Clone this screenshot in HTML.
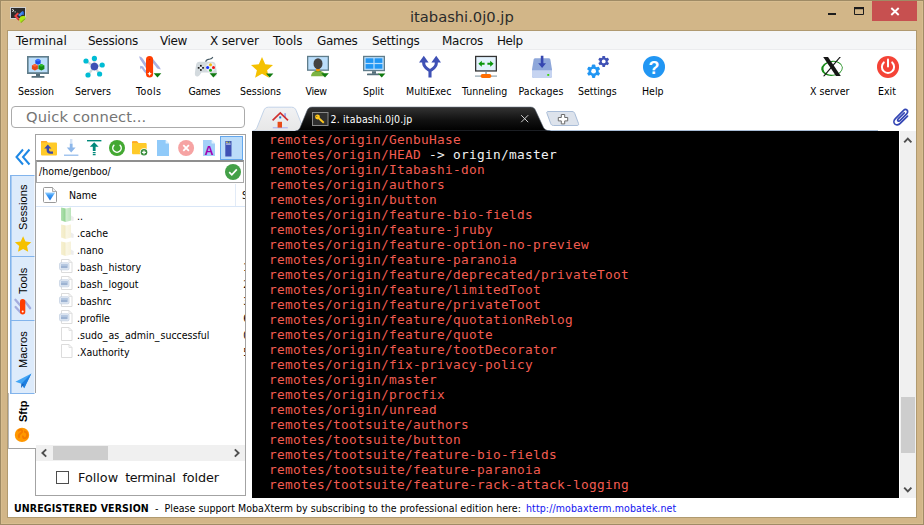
<!DOCTYPE html>
<html><head><meta charset="utf-8"><title>itabashi.0j0.jp</title>
<style>
*{box-sizing:border-box;margin:0;padding:0}
html,body{width:924px;height:525px;overflow:hidden}
body{background:#d2b688;font-family:"Liberation Sans","DejaVu Sans",sans-serif;position:relative;color:#000}
.abs,body>div,body>svg,body>span,body>pre{position:absolute}
svg{overflow:visible;display:block}
#frame{left:0;top:0;width:924px;height:525px;border:1px solid #9f8b65;box-shadow:inset 0 0 0 1px #d7bd90}
#cframe{left:7px;top:30px;width:910px;height:488px;border:1px solid #b09a70}
#title{left:410px;top:0;height:31px;white-space:pre;font-family:"DejaVu Sans","Liberation Sans",sans-serif;font-size:14.7px;line-height:34px;color:#2b2b2b}
#client{left:8px;top:31px;width:908px;height:486px;background:#fff}
#menubar{left:8px;top:31px;width:908px;height:19px;background:#f5f6f7;border-bottom:1px solid #ebecee}
.menu{top:32px;height:19px;font-family:"DejaVu Sans","Liberation Sans",sans-serif;font-size:12px;line-height:19px;white-space:pre;color:#111}
.tl{top:84px;height:14px;font-family:"DejaVu Sans Condensed","DejaVu Sans","Liberation Sans",sans-serif;font-stretch:condensed;font-size:10.5px;line-height:14px;white-space:pre;color:#000}
#closebtn{left:872px;top:1px;width:45px;height:20px;background:#c75050}
/* terminal */
#term{left:252px;top:131px;width:647px;height:367px;background:#000;overflow:hidden}
#term pre{position:absolute;left:17px;top:1px;font-family:"DejaVu Sans Mono","Liberation Mono",monospace;font-size:12.8px;line-height:15px;color:#f25c51;letter-spacing:.294px;}
#term pre b{font-weight:normal;color:#f2f2f2;}
#vscroll{left:900px;top:131px;width:16px;height:367px;background:#f0f0f0}
#vthumb{left:901px;top:397px;width:14px;height:56px;background:#cdcdcd}
.vt{left:10px;width:25px;background:#ddebfb;border:1px solid #82b4ec;border-right-color:#f1f6fd;box-shadow:inset 1px 0 0 #a9cbf2}
.vtt{width:0;height:0;letter-spacing:.12px;font-family:"Liberation Sans",sans-serif;font-size:11px;line-height:12px;white-space:pre;transform:rotate(-90deg);transform-origin:0 0;color:#000}
.ft{height:14px;line-height:14px;font-family:"DejaVu Sans Condensed","DejaVu Sans","Liberation Sans",sans-serif;font-stretch:condensed;font-size:10.5px;white-space:pre;color:#000}
.tah{font-family:"DejaVu Sans Condensed","DejaVu Sans","Liberation Sans",sans-serif;font-stretch:condensed;}
.ft i{font-style:normal;letter-spacing:1.1px}
</style></head><body>
<div id="frame"></div>
<!-- title bar -->
<svg id="appicon" style="left:10px;top:7px" width="16" height="16" viewBox="10 7 16 16">
<rect x="10.500" y="7.500" width="15" height="11" fill="#2d2d2d" stroke="#d0d0d0" stroke-width="1"/>
<path d="M12.200 9.400l1.800 1.100-1.800 1.100" fill="none" stroke="#fff" stroke-width=".9"/><path d="M14.400 11.900h1.600" stroke="#ddd" stroke-width=".7"/>
<path d="M14 16l3.500-3.500 1.500 1.300-2.200 2.200 3.200 3.200-1.400 1.300z" fill="#ee4545"/><path d="M14 16l4.600 4.500 1.400-1.300-.8-.8-1 .9z" fill="#c62828"/>
<path d="M18 15l4.500-4 1.500 1.300v2.200l-2 .2-2 1.700z" fill="#4a8cf0"/><path d="M22.500 11l1.500 1.300v2.200l-1.400.1z" fill="#1f5fd0"/>
<path d="M19 19.800l1.500-3.400 2.500-.4 1.500-.2 1.200 1.700-5.200 4.800z" fill="#aeea10"/><path d="M20.500 22.300l5.200-4.800-.3 1.600-4.300 3.800z" fill="#7cb800"/>
</svg>
<div id="title">itabashi.0j0.jp</div>
<svg style="left:826px;top:5px" width="42" height="14" viewBox="826 5 42 14">
<rect x="828" y="13" width="8" height="2" fill="#1c1c1c"/>
<path d="M854.5 8v6.5h9V8z" fill="none" stroke="#1c1c1c" stroke-width="1"/><rect x="854" y="7" width="10" height="2.2" fill="#1c1c1c"/>
</svg>
<div id="closebtn"></div>
<svg style="left:890px;top:7px" width="10" height="9" viewBox="890 7 10 9"><path d="M891.300 8l7.400 7M898.700 8l-7.400 7" stroke="#fff" stroke-width="1.900" fill="none"/></svg>

<div id="cframe"></div>
<div id="client"></div>
<div id="menubar"></div>
<span class="menu" style="left:16px">Terminal</span><span class="menu" style="left:88px;letter-spacing:-0.25px">Sessions</span><span class="menu" style="left:160px;letter-spacing:-0.4px">View</span><span class="menu" style="left:210px;letter-spacing:-0.15px">X server</span><span class="menu" style="left:273px">Tools</span><span class="menu" style="left:317px;letter-spacing:-0.3px">Games</span><span class="menu" style="left:372px;letter-spacing:-0.2px">Settings</span><span class="menu" style="left:442px;letter-spacing:-0.25px">Macros</span><span class="menu" style="left:497px;letter-spacing:-0.4px">Help</span>

<!-- TOOLBAR-ICONS -->
<!-- Session -->
<svg style="left:27px;top:55px" width="24" height="24" viewBox="27 55 24 24">
<rect x="27" y="56" width="22" height="18" fill="#607d8b"/><rect x="28.6" y="57.6" width="18.8" height="14.6" fill="#bbdefb"/>
<rect x="36" y="74" width="4" height="2" fill="#546e7a"/><rect x="31.5" y="76" width="13" height="1.8" rx=".6" fill="#546e7a"/>
<path d="M35.300 60.200l2.700-1.400 2.700 1.400v3.200l-2.700 1.400-2.700-1.400z" fill="#1e50e6"/><path d="M35.300 60.200l2.700 1.200 2.700-1.200-2.700-1.400z" fill="#3a75ff"/>
<path d="M31.900 65.600l3-1.500 3 1.500v3.300l-3 1.500-3-1.500z" fill="#e64a19"/><path d="M31.900 65.600l3 1.200 3-1.200-3-1.500z" fill="#ff6a3b"/>
<path d="M38.400 65.600l3-1.500 3 1.500v3.300l-3 1.500-3-1.500z" fill="#138a13"/><path d="M38.400 65.600l3 1.200 3-1.200-3-1.500z" fill="#2bbd2b"/>
</svg>
<!-- Servers -->
<svg style="left:82px;top:55px" width="24" height="24" viewBox="82 55 24 24">
<path d="M94.400 66.600L86 61M94.400 66.600V58.500M94.400 66.600l7.800-1.600M94.400 66.600l5.200 7.400M94.400 66.600L88 75" stroke="#cfd8dc" stroke-width="2.200" fill="none"/>
<circle cx="94.400" cy="66.600" r="3.800" fill="#3f51b5"/>
<circle cx="86" cy="61" r="2.600" fill="#00bcd4"/><circle cx="94.400" cy="58.400" r="2.600" fill="#00bcd4"/><circle cx="102.200" cy="65" r="2.600" fill="#00bcd4"/><circle cx="99.600" cy="74" r="2.600" fill="#00bcd4"/><circle cx="88" cy="75" r="2.600" fill="#00bcd4"/>
</svg>
<!-- Tools -->
<svg style="left:138px;top:55px" width="24" height="24" viewBox="138 55 24 24">
<path d="M139.200 56.300c1.600.3 3 1.500 4.200 3.200l4 6-1.600 2.400-5.600-8.400c-.6-1-.9-2.200-1-3.200z" fill="#a9b1e2"/>
<path d="M152.400 58.200l6.800 8.400c.8 1 1.300 2 1.500 3l-3.400-1.200-5.400-7z" fill="#a9b1e2"/>
<path d="M140.400 65.800c-.6 1.200-.4 2.400.4 3.600l.8-1.400c1.500 3 3.400 5 5.400 6.200l.4-2.800c-1.800-1.200-3.200-2.800-4.200-5z" fill="#a9b1e2"/>
<rect x="146" y="55.900" width="7.100" height="21.600" rx="3.550" fill="#ff3d00"/>
<circle cx="149.500" cy="59.500" r=".8" fill="#c62f00"/>
<path d="M149.600 71.400l.7 1.600 1.600.7-1.600.7-.7 1.600-.7-1.600-1.600-.7 1.600-.7z" fill="#fff"/>
<path d="M153.700 73.200h7.600l-3.800 4.400z" fill="#107a10"/>
</svg>
<!-- Games -->
<svg style="left:194px;top:55px" width="24" height="24" viewBox="194 55 24 24">
<path d="M205.800 62.200c-.2-1.800.8-2.400 2.600-2.800s3.800-.4 4.400-2.400" fill="none" stroke="#455a64" stroke-width="1.100"/>
<path d="M199.500 61.800h12.800c2 0 3 1 3.400 3l1.200 8c.3 2.200-.5 3.800-2.200 3.800-1.200 0-2-.6-2.800-1.800l-1.500-2.300h-9l-1.500 2.300c-.8 1.200-1.600 1.800-2.800 1.800-1.700 0-2.500-1.600-2.200-3.800l1.200-8c.4-2 1.400-3 3.400-3z" fill="#d3dade"/>
<circle cx="210.500" cy="67.400" r="4.600" fill="#e9edef"/>
<rect x="200" y="64.900" width="1.700" height="1.700" fill="#1a1a1a"/><rect x="200" y="69.100" width="1.700" height="1.700" fill="#1a1a1a"/><rect x="197.800" y="67" width="1.700" height="1.700" fill="#1a1a1a"/><rect x="202.200" y="67" width="1.700" height="1.700" fill="#1a1a1a"/><rect x="200" y="67" width="1.700" height="1.700" fill="#f4f6f7"/>
<circle cx="210.500" cy="64.700" r="1.500" fill="#f2b90f"/><circle cx="207.600" cy="67.500" r="1.500" fill="#1030ff"/><circle cx="213.500" cy="67.500" r="1.500" fill="#f51414"/><circle cx="210.500" cy="70.200" r="1.500" fill="#14a014"/>
<path d="M209.600 73.200h7.600l-3.800 4.400z" fill="#107a10"/>
</svg>
<!-- Sessions star -->
<svg style="left:250px;top:55px" width="24" height="24" viewBox="250 55 24 24">
<path d="M262 57l3.200 7.300 7.800.7-5.900 5.200 1.800 7.600-6.900-4.100-6.900 4.100 1.800-7.600-5.900-5.200 7.800-.7z" fill="#f5c100"/>
<path d="M266 73.400h7.400l-3.700 4.200z" fill="#107a10"/>
</svg>
<!-- View -->
<svg style="left:306px;top:55px" width="24" height="24" viewBox="306 55 24 24">
<rect x="307" y="55.800" width="22" height="15" fill="#5f7c8a"/><rect x="308.300" y="57.100" width="19.400" height="12.400" fill="#bbdefb"/>
<path d="M311 76.200c.2-3 2-5 5-5.500h4c3 .5 4.800 2.500 5 5.500z" fill="#7cb342"/><path d="M314.500 71.300c1 1.200 5.500 1.200 7 0l-1.500-.6h-4z" fill="#5a9e2f"/>
<rect x="316.100" y="68" width="3.800" height="3.300" rx="1.200" fill="#ff9800"/>
<ellipse cx="318" cy="63.700" rx="4.500" ry="5.500" fill="#424242"/>
<path d="M321.200 73.200h7.600l-3.800 4.400z" fill="#107a10"/>
</svg>
<!-- Split -->
<svg style="left:362px;top:55px" width="24" height="24" viewBox="362 55 24 24">
<rect x="363" y="55.800" width="22" height="15.400" fill="#607d8b"/><rect x="364.300" y="57.100" width="19.400" height="12.800" fill="#bbdefb"/>
<rect x="365.600" y="58.300" width="7.800" height="4.600" fill="#2196f3"/><rect x="374.600" y="58.300" width="7.800" height="4.600" fill="#2196f3"/><rect x="365.600" y="64.100" width="7.800" height="4.600" fill="#2196f3"/><rect x="374.600" y="64.100" width="7.800" height="4.600" fill="#2196f3"/>
<rect x="372" y="71.200" width="4" height="2.600" fill="#546e7a"/><rect x="367" y="73.600" width="12" height="1.700" rx=".6" fill="#546e7a"/>
<path d="M378 73.400h7.400l-3.700 4.200z" fill="#107a10"/>
</svg>
<!-- MultiExec -->
<svg style="left:418px;top:55px" width="24" height="24" viewBox="418 55 24 24">
<path d="M423.700 61.500V63.300C423.700 67.200 426.500 68.200 430 70.800M436.300 61.500V63.300C436.300 67.200 433.500 68.200 430 70.800M430 69.500V77.600" fill="none" stroke="#3f51b5" stroke-width="3.100" stroke-linejoin="round"/>
<path d="M419 62.600l4.800-6.800 4.800 6.800zM431.400 62.600l4.800-6.800 4.800 6.800z" fill="#3f51b5"/>
</svg>
<!-- Tunneling -->
<svg style="left:474px;top:55px" width="24" height="24" viewBox="474 55 24 24">
<rect x="475" y="55.800" width="22" height="15.800" fill="#333"/><rect x="476.300" y="57.100" width="19.400" height="13.200" fill="#e3f2fd"/>
<path d="M478.400 63.800l3.400-3v2h2.800v2h-2.800v2zM493.600 63.800l-3.400-3v2h-2.800v2h2.800v2z" fill="#0a960a"/>
<rect x="485.400" y="71.600" width="1.300" height="3" fill="#78909c"/>
<rect x="475" y="75.500" width="22" height="1.200" fill="#90a4ae"/>
<rect x="480.700" y="74" width="10.600" height="4" rx="1.800" fill="#ff6d00"/>
</svg>
<!-- Packages -->
<svg style="left:530px;top:55px" width="24" height="24" viewBox="530 55 24 24">
<path d="M535.400 58.200h13.200c1 0 1.600.5 1.800 1.500l1.600 9.800v6.300c0 1.400-.8 2.200-2.200 2.200h-15.600c-1.400 0-2.200-.8-2.200-2.200v-6.300l1.600-9.800c.2-1 .8-1.500 1.800-1.500z" fill="#8ea7da"/>
<path d="M532 70.200h20v5.600c0 1.400-.8 2.200-2.200 2.200h-15.600c-1.400 0-2.200-.8-2.200-2.200z" fill="#c6d4f1"/>
<rect x="547.300" y="74" width="1.900" height="1.900" fill="#3fd40f"/>
<path d="M540.800 55.800h2.600v7.400h2.600l-3.900 4.800-3.900-4.800h2.600z" fill="#3546b0"/>
</svg>
<!-- Settings -->
<svg style="left:586px;top:55px" width="24" height="24" viewBox="586 55 24 24">
<g transform="translate(593.600 71.200)"><g fill="#2196f3"><rect x="-1.700" y="-6.700" width="3.400" height="13.400" rx=".8"/><rect x="-1.700" y="-6.700" width="3.400" height="13.400" rx=".8" transform="rotate(60)"/><rect x="-1.700" y="-6.700" width="3.400" height="13.400" rx=".8" transform="rotate(120)"/><circle r="5"/></g><circle r="2.400" fill="#fff"/></g>
<g transform="translate(603.700 61.400)"><g fill="#3f51b5"><rect x="-1.400" y="-5.500" width="2.800" height="11" rx=".6"/><rect x="-1.400" y="-5.500" width="2.800" height="11" rx=".6" transform="rotate(60)"/><rect x="-1.400" y="-5.500" width="2.800" height="11" rx=".6" transform="rotate(120)"/><circle r="4"/></g><circle r="1.900" fill="#fff"/></g>
</svg>
<!-- Help -->
<svg style="left:642px;top:55px" width="24" height="24" viewBox="642 55 24 24">
<circle cx="654" cy="66.900" r="11" fill="#2196f3"/>
<text x="654" y="73.600" text-anchor="middle" font-family="Liberation Sans,sans-serif" font-weight="bold" font-size="18" fill="#fff">?</text>
</svg>
<!-- X server -->
<svg style="left:820px;top:55px" width="24" height="24" viewBox="820 55 24 24">
<g transform="rotate(-6 832 68.400)"><path fill-rule="evenodd" fill="#178a17" d="M821.200 68.400a10.800 7.500 0 1 0 21.600 0a10.800 7.500 0 1 0-21.600 0zM823.400 68.400a9.300 6.400 0 1 1 18.600 0a9.300 6.400 0 1 1-18.600 0z"/></g>
<path d="M823.200 57h4.800l12.800 19h-4.800z" fill="#161616"/>
<path d="M839.400 57h1.500l-16.400 19.300h-1.500z" fill="#161616"/>
</svg>
<!-- Exit -->
<svg style="left:876px;top:55px" width="24" height="24" viewBox="876 55 24 24">
<circle cx="888" cy="66.900" r="11" fill="#f44336"/>
<path d="M883.800 62.400a6.100 6.100 0 1 0 8.400 0" fill="none" stroke="#fff" stroke-width="2" stroke-linecap="round"/>
<path d="M888 59.600v7" stroke="#fff" stroke-width="2" stroke-linecap="round"/>
</svg>
<!-- /TOOLBAR-ICONS -->
<!-- TOOLBAR-LABELS -->
<span class="tl" style="left:18px">Session</span><span class="tl" style="left:75px">Servers</span><span class="tl" style="left:136px;letter-spacing:0.45px">Tools</span><span class="tl" style="left:188.5px;letter-spacing:-0.3px">Games</span><span class="tl" style="left:240px">Sessions</span><span class="tl" style="left:305.5px;letter-spacing:-0.3px">View</span><span class="tl" style="left:363px">Split</span><span class="tl" style="left:406px">MultiExec</span><span class="tl" style="left:462px">Tunneling</span><span class="tl" style="left:518.500px;letter-spacing:.12px">Packages</span><span class="tl" style="left:578px">Settings</span><span class="tl" style="left:642px">Help</span><span class="tl" style="left:810px">X server</span><span class="tl" style="left:878px">Exit</span>

<!-- QUICKROW -->
<div id="quick" style="left:11px;top:106px;width:234px;height:22px;border:1px solid #ababab;border-radius:4px;background:#fff"></div>
<span id="quicktxt" style="left:26px;top:106px;height:22px;line-height:21px;font-family:'DejaVu Sans','Liberation Sans',sans-serif;font-size:14.7px;letter-spacing:.1px;color:#757575;white-space:pre">Quick connect...</span>
<!-- tabs -->
<svg style="left:250px;top:104px" width="640" height="28" viewBox="250 104 640 28">
<defs><linearGradient id="tg" x1="0" y1="0" x2="0" y2="1"><stop offset="0" stop-color="#333"/><stop offset=".55" stop-color="#111"/><stop offset="1" stop-color="#000"/></linearGradient>
<linearGradient id="hg" x1="0" y1="0" x2="0" y2="1"><stop offset="0" stop-color="#f1f2f4"/><stop offset="1" stop-color="#e7e7e7"/></linearGradient></defs>
<path d="M547 130.500H878" stroke="#a9bdd6" stroke-width="1"/>
<path d="M252.500 131c2.500-.4 3.800-1.600 4.700-3.800l6.600-16.600c.9-2.300 2.200-3.400 4.700-3.400h23c2.500 0 3.800 1.100 4.700 3.400l6.600 16.600c.9 2.200 2.200 3.400 4.700 3.800z" fill="url(#hg)" stroke="#c3d3e8" stroke-width="1"/>
<path d="M295.500 131c2.500-.4 3.700-1.400 4.600-3.400l7-17c.9-2.300 2.300-3.500 5-3.500h218.500c2.700 0 4.100 1.200 5 3.500l7.900 17c.9 2 3 3 7 3.400z" fill="url(#tg)" stroke="#5b6775" stroke-width=".6"/>
<!-- home icon -->
<rect x="272.800" y="127" width="15" height="1.400" fill="#b7bdf0"/>
<rect x="284.200" y="113.200" width="1.800" height="4" fill="#9fa8e8"/>
<path d="M272.600 120.400l7.700-7.400 7.700 7.400" fill="none" stroke="#cf3030" stroke-width="1.700"/>
<rect x="277.600" y="121.800" width="4.400" height="5.800" fill="#e84a17"/>
<rect x="279.200" y="116.400" width="2" height="2" fill="#1b74d1"/>
<!-- key icon -->
<rect x="312.500" y="112.500" width="15.500" height="13" fill="#2f2f2f" stroke="#8a8a8a" stroke-width="1"/>
<circle cx="317.500" cy="117" r="2.400" fill="#ffc81e"/><circle cx="316.800" cy="116.300" r=".6" fill="#7a5c00"/><path d="M318.800 118.200l5 4.500" stroke="#ffc81e" stroke-width="1.900"/>
<!-- close x -->
<path d="M521.200 115.200l7 7M528.200 115.200l-7 7" stroke="#d0d0d0" stroke-width="1"/>
<!-- new tab -->
<path d="M548 111.500h24c1.500 0 2.300.700 2.800 2l3.700 10c.4 1.200 0 2-1.400 2h-23.600c-1.400 0-2.300-.6-2.800-2l-3.700-10c-.5-1.300-.2-2 1-2z" fill="#dde3ec" stroke="#a9bdd8" stroke-width="1"/>
<path d="M561.300 114.500h3.400v3h3v3.400h-3v3h-3.400v-3h-3v-3.400h3z" fill="#fff" stroke="#6b6b6b" stroke-width="1"/>
</svg>
<span id="tabtxt" class="tah" style="left:330.500px;top:111.500px;height:15px;line-height:15px;font-size:10.5px;letter-spacing:.18px;color:#fff;white-space:pre">2. itabashi.0j0.jp</span>
<!-- paperclip -->
<svg style="left:892px;top:107px" width="19" height="19" viewBox="892 107 19 19">
<g transform="translate(901.300 117.500) rotate(45) scale(.72 .9) translate(-12.500 -12)"><path d="M17.250 6V17.500A4.750 4.750 0 0 1 7.750 17.500V5A3.250 3.250 0 0 1 14.250 5V15.500A1.750 1.750 0 0 1 10.750 15.500V6" fill="none" stroke="#3446b4" stroke-width="1.700" vector-effect="non-scaling-stroke" stroke-linecap="round"/></g>
</svg>
<!-- /QUICKROW -->
<!-- SIDEBAR -->
<!-- collapse chevrons -->
<svg style="left:15px;top:148px" width="16" height="18" viewBox="15 148 16 18"><path d="M23 149.500l-6.500 7.500 6.500 7.500M29.500 149.500l-6.500 7.500 6.500 7.500" fill="none" stroke="#1e88e5" stroke-width="2"/></svg>
<!-- panel -->
<div id="panel" style="left:35px;top:134px;width:211px;height:362px;border:1px solid #a3a3a3;background:#fff"></div>
<div id="vtsel" style="left:8px;top:393px;width:29px;height:56px;background:#fff;border-left:1px solid #b9b9b9;border-bottom:1px solid #a3a3a3"></div>
<!-- vertical tabs -->
<div class="vt" style="top:175px;height:83px"></div>
<div class="vt" style="top:256px;height:66px"></div>
<div class="vt" style="top:320px;height:74px"></div>
<span class="vtt" style="left:17px;top:229.500px">Sessions</span>
<span class="vtt" style="left:17px;top:293.500px">Tools</span>
<span class="vtt" style="left:17px;top:368px">Macros</span>
<span class="vtt" style="left:17px;top:421.500px;font-weight:bold;letter-spacing:0">Sftp</span>
<svg style="left:12px;top:236px" width="22" height="210" viewBox="12 236 22 210">
<path d="M23.100 236.300l2.400 5.300 5.800.6-4.300 3.900 1.200 5.700-5.100-2.900-5.100 2.900 1.200-5.700-4.300-3.900 5.800-.6z" fill="#f5c100"/>
<path d="M15.400 299.800l5.200 6M25 301.400l5.200 6.800M15.600 307l4.800 5.200" stroke="#a3acde" stroke-width="2.300" stroke-linecap="round" fill="none"/>
<rect x="20" y="299" width="5.300" height="15.500" rx="2.650" fill="#ff3d00"/><circle cx="22.700" cy="311.600" r="1" fill="#fff"/>
<path d="M31.400 373.500l-16 8.200 6 2 2.800 4.500z" fill="#42a5f5"/><path d="M31.400 373.500l-10 10.200 2.800 4.500z" fill="#1e7fe0"/><path d="M21.400 383.700l-.4 4.300 3.200-3.800z" fill="#1565c0"/>
<circle cx="22" cy="434.900" r="7.200" fill="#ff9800"/>
<path d="M18 431c1.600-1.600 3.600-1.600 4.200-.2s-1.400 2.200-2.400 3.200-1.400 2.400-.4 3.800M24 431.500c1.600 0 3 1.400 3.200 3s-.6 3.200-2.200 3.600-2.400-1-1.800-2.400" fill="none" stroke="#f57c00" stroke-width="2"/>
</svg>
<div id="selbtn" style="left:220px;top:136px;width:23px;height:24px;background:#bbdcf9;border:1px solid #64a7ec"></div>
<svg style="left:38px;top:138px" width="206" height="20" viewBox="38 138 206 20">
<!-- folder up -->
<path d="M41 142.200c0-.8.500-1.300 1.300-1.300h4l1.500 1.600h7.900c.8 0 1.300.5 1.300 1.300v10.400c0 .8-.5 1.300-1.300 1.300h-13.400c-.8 0-1.300-.5-1.300-1.300z" fill="#ffca28"/><path d="M41 142.200c0-.8.500-1.300 1.300-1.300h4l1.500 1.600h-6.800z" fill="#ffa726"/>
<path d="M53 152.600h-2.600c-1.800 0-2.600-1-2.600-2.600v-2.600" fill="none" stroke="#3949ab" stroke-width="2.400"/><path d="M44.200 148.600l3.600-4.200 3.600 4.200z" fill="#3949ab"/>
<!-- download -->
<path d="M70 140h2.400M70 142h2.400" stroke="#a9c8ee" stroke-width="1.100"/><path d="M69.800 143.400h2.800v4.200h3l-4.400 5-4.400-5h3z" fill="#8db7ea"/><rect x="64" y="154.600" width="14.400" height="1.200" fill="#8db7ea"/>
<!-- upload -->
<rect x="87" y="140" width="14.400" height="1.400" fill="#00897b"/><path d="M92.800 151h2.800v-4.200h3l-4.400-4.600-4.400 4.600h3z" fill="#00897b"/><path d="M92.800 152.600h2.800M92.800 154.600h2.800" stroke="#00897b" stroke-width="1.100"/>
<!-- refresh -->
<circle cx="117" cy="148" r="8" fill="#43a832"/><path d="M113.900 145.200a4.200 4.200 0 1 0 6.200 0" fill="none" stroke="#fff" stroke-width="1.500" stroke-linecap="round"/>
<!-- new folder -->
<path d="M132 142.600c0-.8.500-1.300 1.300-1.300h3.600l1.500 1.600h7c.8 0 1.300.5 1.300 1.300v8.800c0 .8-.5 1.300-1.300 1.300h-12.100c-.8 0-1.300-.5-1.300-1.300z" fill="#ffca28"/><path d="M132 142.600c0-.8.500-1.300 1.300-1.300h3.600l1.500 1.600h-6.400z" fill="#ffa726"/>
<circle cx="144" cy="152.300" r="4.100" fill="#fff"/><circle cx="144" cy="152.300" r="3.300" fill="#388e3c"/><path d="M142.100 152.300h3.800M144 150.400v3.800" stroke="#fff" stroke-width="1.300"/>
<!-- new file -->
<path d="M157 140h8.600l3.400 3.400v12.600h-12z" fill="#90caf9"/><path d="M165.600 140v3.400h3.400z" fill="#e3f2fd"/>
<!-- delete -->
<circle cx="186.100" cy="148" r="8" fill="#f6a3a3"/><path d="M183.300 145.200l5.600 5.600M188.900 145.200l-5.600 5.600" stroke="#fff" stroke-width="1.800"/>
<!-- rename -->
<path d="M203 140h8.600l3.400 3.400v12.600h-12z" fill="#a3d0f8"/><path d="M211.600 140v3.400h3.400z" fill="#e3f2fd"/>
<text x="209" y="155" text-anchor="middle" font-family="Liberation Sans,sans-serif" font-weight="bold" font-size="12.500" fill="#a000b0">A</text>
<!-- server -->
<rect x="225.300" y="141" width="6.200" height="15.500" fill="#3f51b5"/><rect x="226.100" y="143.200" width="4.600" height="1.800" fill="#9fa8da"/><rect x="226.200" y="141.700" width="1.400" height="1.200" fill="#ffeb3b"/><rect x="228.800" y="141.700" width="1.400" height="1.200" fill="#8bc34a"/>
</svg>
<div id="pathbox" style="left:36px;top:160px;width:208px;height:23px;border:1px solid #a9a9a9;border-top:2px solid #8f8f8f;background:#fff"></div>
<span id="pathtxt" class="tah" style="left:39px;top:164px;height:14px;line-height:14px;font-size:10.5px;white-space:pre">/home/genboo/</span>
<svg style="left:225px;top:164px" width="16" height="16" viewBox="225 164 16 16"><circle cx="233" cy="172" r="8" fill="#43a047"/><path d="M229.200 172.200l2.600 2.600 5-5.400" fill="none" stroke="#fff" stroke-width="1.700"/></svg>
<!-- list header -->
<div style="left:36px;top:206px;width:209px;height:1px;background:#d9e6f7"></div>
<div style="left:235px;top:184px;width:1px;height:22px;background:#e2ebf7"></div>
<svg style="left:43px;top:187px" width="14" height="16" viewBox="43 187 14 16"><defs><linearGradient id="tri" x1="0" y1="0" x2="0" y2="1"><stop offset="0" stop-color="#9ad2ff"/><stop offset=".35" stop-color="#3d9bf5"/><stop offset="1" stop-color="#1870e0"/></linearGradient></defs><path d="M44.500 187.500h8l4 4v10c0 .6-.4 1-1 1h-11c-.6 0-1-.4-1-1v-13c0-.6.400-1 1-1z" fill="#fff" stroke="#9a9a9a" stroke-width="1"/><path d="M52.500 187.500v4h4" fill="#f0f0f0" stroke="#9a9a9a" stroke-width=".8"/><path d="M44.800 192.600h10.400l-5.200 8z" fill="url(#tri)"/></svg>
<span class="ft" style="left:69px;top:188px">Name</span>
<div style="left:241px;top:184px;width:4px;height:22px;overflow:hidden"><span class="ft" style="position:absolute;left:1px;top:4px">Size</span></div>
<!-- files -->
<svg style="left:59px;top:206px" width="16" height="156" viewBox="58 206 16 156">
<defs>
<linearGradient id="fg" x1="0" y1="0" x2="1" y2="0"><stop offset="0" stop-color="#f6efcb"/><stop offset="1" stop-color="#efe6b8"/></linearGradient>
<linearGradient id="gg" x1="0" y1="0" x2="1" y2="0"><stop offset="0" stop-color="#a5dca5"/><stop offset="1" stop-color="#7ccb7c"/></linearGradient>
<g id="fold"><path d="M60 .5l4.700.900v13.600l-4.700-1.600z"/><path d="M64.700 1.400l5.300-.9v13l-5.300 1.500z" opacity=".6"/><path d="M70 8.500l2.800 1.800-.4 3.600-2.400-.4z" fill="#d8d8d8" opacity=".55"/></g>
<g id="doc"><path d="M60.500 1.500h7.500l3 3v10h-10.500z" fill="#fff" stroke="#dcdcdc" stroke-width="1"/><path d="M68 1.500v3h3" fill="none" stroke="#dcdcdc" stroke-width=".8"/></g>
<g id="scr"><use href="#doc"/><rect x="58.600" y="4.800" width="9.400" height="7" rx="1.200" fill="#e4ebf5" stroke="#bccadd" stroke-width=".7"/><rect x="60" y="6.200" width="6.600" height="4" fill="#9db3d2"/><rect x="60" y="6.200" width="6.600" height="1.600" fill="#b9cbe3"/></g>
</defs>
<use href="#fold" y="207" fill="url(#gg)" opacity=".85"/>
<use href="#fold" y="224" fill="url(#fg)" opacity=".85"/>
<use href="#fold" y="241" fill="url(#fg)" opacity=".85"/>
<use href="#scr" y="258"/><use href="#scr" y="275"/><use href="#scr" y="292"/><use href="#scr" y="309"/>
<use href="#doc" y="326"/><use href="#doc" y="343"/>
</svg>
<span class="ft" style="left:77px;top:209px">..</span>
<span class="ft" style="left:77px;top:226px">.cache</span>
<span class="ft" style="left:77px;top:243px">.nano</span>
<span class="ft" style="left:77px;top:260px">.bash<i>_</i>history</span>
<span class="ft" style="left:77px;top:277px">.bash<i>_</i>logout</span>
<span class="ft" style="left:77px;top:294px">.bashrc</span>
<span class="ft" style="left:77px;top:311px">.profile</span>
<span class="ft" style="left:77px;top:328px">.sudo<i>_</i>as<i>_</i>admin<i>_</i>successful</span>
<span class="ft" style="left:77px;top:345px">.Xauthority</span>
<div id="sizes" style="left:242px;top:207px;width:3px;height:160px;overflow:hidden"><span class="ft" style="position:absolute;left:1.300px;top:53px">1</span><span class="ft" style="position:absolute;left:1.300px;top:70px">2</span><span class="ft" style="position:absolute;left:1.300px;top:87px">3</span><span class="ft" style="position:absolute;left:1.300px;top:104px">6</span><span class="ft" style="position:absolute;left:1.300px;top:121px">0</span><span class="ft" style="position:absolute;left:1.300px;top:138px">5</span></div>
<!-- h scrollbar -->
<div style="left:36px;top:445px;width:209px;height:16px;background:#f0f0f0"></div>
<div style="left:53px;top:446px;width:55px;height:14px;background:#cdcdcd"></div>
<svg style="left:40px;top:448px" width="202" height="10" viewBox="40 448 202 10"><path d="M46.200 449.400l-3.800 3.600 3.800 3.600M234.800 449.400l3.800 3.600-3.800 3.600" fill="none" stroke="#505050" stroke-width="1.900"/></svg>
<!-- checkbox -->
<div style="left:56px;top:471px;width:13px;height:13px;border:1px solid #4d4d4d;background:#fff"></div>
<span id="follow" style="left:78px;top:469px;height:18px;line-height:18px;font-family:'DejaVu Sans','Liberation Sans',sans-serif;font-size:12.800px;word-spacing:3px;white-space:pre;color:#111">Follow <em style="font-style:normal;letter-spacing:-.42px">terminal</em> <em style="font-style:normal;letter-spacing:-.1px">folder</em></span>
<!-- /SIDEBAR -->
<!-- TERMINAL -->
<div id="term"><pre>remotes/origin/GenbuHase
remotes/origin/HEAD<b> -&gt; origin/master</b>
remotes/origin/Itabashi-don
remotes/origin/authors
remotes/origin/button
remotes/origin/feature-bio-fields
remotes/origin/feature-jruby
remotes/origin/feature-option-no-preview
remotes/origin/feature-paranoia
remotes/origin/feature/deprecated/privateToot
remotes/origin/feature/limitedToot
remotes/origin/feature/privateToot
remotes/origin/feature/quotationReblog
remotes/origin/feature/quote
remotes/origin/feature/tootDecorator
remotes/origin/fix-privacy-policy
remotes/origin/master
remotes/origin/procfix
remotes/origin/unread
remotes/tootsuite/authors
remotes/tootsuite/button
remotes/tootsuite/feature-bio-fields
remotes/tootsuite/feature-paranoia
remotes/tootsuite/feature-rack-attack-logging</pre></div>
<div id="vscroll"></div><div id="vthumb"></div>
<svg style="left:903px;top:136px" width="10" height="360" viewBox="903 136 10 360"><path d="M904.2 142.4l3.6-3.8 3.6 3.8M904.2 487.6l3.6 3.8 3.6-3.8" fill="none" stroke="#505050" stroke-width="1.9"/></svg>
<!-- STATUS -->
<span id="st1" class="tah" style="left:14px;top:501px;height:14px;line-height:14px;font-size:10.5px;font-weight:bold;letter-spacing:.12px;white-space:pre">UNREGISTERED VERSION</span>
<span id="st2" class="tah" style="left:155px;top:501px;height:14px;line-height:14px;font-size:10.5px;letter-spacing:.04px;white-space:pre">-  Please support MobaXterm by subscribing to the professional edition here:</span>
<span id="st3" class="tah" style="left:526px;top:501px;height:14px;line-height:14px;font-size:10.5px;letter-spacing:.12px;color:#1212f0;white-space:pre">http://mobaxterm.mobatek.net</span>
<!-- /STATUS -->
</body></html>
